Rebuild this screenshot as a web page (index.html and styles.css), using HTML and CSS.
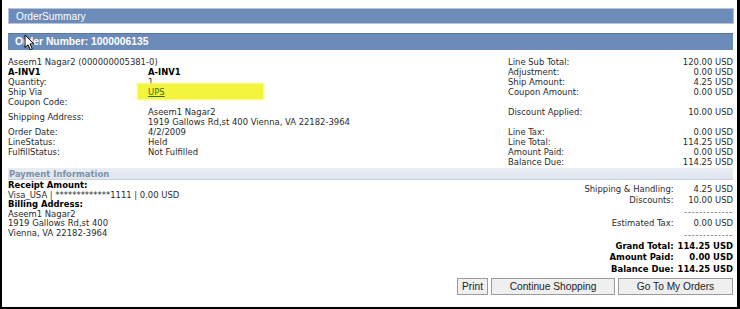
FILE: index.html
```html
<!DOCTYPE html>
<html lang="en">
<head>
    <meta charset="UTF-8">
    <title>Order Summary</title>
    <link rel="stylesheet" href="styles.css">
</head>
<body>
    <div class="frame">
        <div class="bar bar-title">OrderSummary</div>
        <div class="bar bar-order">
            Order Number: 1000006135
            <!-- mouse pointer caught in the screenshot -->
            <svg class="cursor" width="11" height="17" viewBox="0 0 11 17">
                <path d="M1 1 L1 13.5 L4 10.8 L6.3 15.6 L8.3 14.7 L6 9.9 L9.8 9.9 Z" fill="#fff" stroke="#000" stroke-width="1" stroke-linejoin="round"/>
            </svg>
        </div>

        <div class="details">
            <div class="span2">Aseem1 Nagar2 (000000005381-0)</div>
            <div class="r-label">Line Sub Total:</div>
            <div class="r-value">120.00 USD</div>

            <div class="bold">A-INV1</div>
            <div class="bold">A-INV1</div>
            <div class="r-label">Adjustment:</div>
            <div class="r-value">0.00 USD</div>

            <div>Quantity:</div>
            <div>1</div>
            <div class="r-label">Ship Amount:</div>
            <div class="r-value">4.25 USD</div>

            <div>Ship Via</div>
            <div><span class="marker"><a href="#" class="ship-link">UPS</a></span></div>
            <div class="r-label">Coupon Amount:</div>
            <div class="r-value">0.00 USD</div>

            <div>Coupon Code:</div>
            <div></div>
            <div class="r-label tall">Discount Applied:</div>
            <div class="r-value tall">10.00 USD</div>

            <div class="middle">Shipping Address:</div>
            <div>Aseem1 Nagar2<br>1919 Gallows Rd,st 400 Vienna, VA 22182-3964</div>

            <div>Order Date:</div>
            <div>4/2/2009</div>
            <div class="r-label">Line Tax:</div>
            <div class="r-value">0.00 USD</div>

            <div>LineStatus:</div>
            <div>Held</div>
            <div class="r-label">Line Total:</div>
            <div class="r-value">114.25 USD</div>

            <div>FulfillStatus:</div>
            <div>Not Fulfilled</div>
            <div class="r-label">Amount Paid:</div>
            <div class="r-value">0.00 USD</div>

            <div class="span2"></div>
            <div class="r-label">Balance Due:</div>
            <div class="r-value">114.25 USD</div>
        </div>

        <div class="section-bar">Payment Information</div>

        <div class="payment">
            <div class="billing">
                <div class="bold">Receipt Amount:</div>
                <div>Visa_USA | *************1111 | 0.00 USD</div>
                <div class="bold">Billing Address:</div>
                <div>Aseem1 Nagar2</div>
                <div>1919 Gallows Rd,st 400</div>
                <div>Vienna, VA 22182-3964</div>
            </div>
            <div class="totals">
                <div>Shipping &amp; Handling:</div><div>4.25 USD</div>
                <div>Discounts:</div><div>10.00 USD</div>
                <div></div><div class="dashes">-------------</div>
                <div>Estimated Tax:</div><div>0.00 USD</div>
                <div></div><div class="dashes">-------------</div>
                <div class="bold">Grand Total:</div><div class="bold">114.25 USD</div>
                <div class="bold">Amount Paid:</div><div class="bold">0.00 USD</div>
                <div class="bold">Balance Due:</div><div class="bold">114.25 USD</div>
            </div>
        </div>

        <div class="actions">
            <button class="btn btn-print">Print</button>
            <button class="btn btn-continue">Continue Shopping</button>
            <button class="btn btn-orders">Go To My Orders</button>
        </div>
    </div>
</body>
</html>
```

FILE: styles.css
```css
body {
    margin: 0;
    background-color: #fff;
}
.frame {
    width: 740px;
    height: 309px;
    box-sizing: border-box;
    border-left: 2px solid #000;
    border-right: 3px solid #000;
    border-bottom: 2px solid #000;
    padding: 8px 4px 0 6px;
    font-family: "DejaVu Sans Condensed", "DejaVu Sans", Verdana, sans-serif;
    font-size: 9.4px;
    color: #2b2b2b;
    overflow: hidden;
}
.bar {
    background-color: #6b8bb9;
    color: #fff;
    font-family: "Liberation Sans", Arial, sans-serif;
    padding-left: 7px;
    box-sizing: border-box;
}
.bar-title {
    height: 16px;
    line-height: 15px;
    font-size: 10.2px;
    border: 1px solid #b8c4d7;
    margin-right: -1px;
    margin-bottom: 9px;
}
.bar-order {
    position: relative;
    height: 17px;
    line-height: 16px;
    font-size: 10.3px;
    font-weight: bold;
    border-top: 1px solid #58779f;
}
.cursor {
    position: absolute;
    left: 16px;
    top: 0;
}
.details {
    display: grid;
    grid-template-columns: 140px 360px 1fr auto;
    line-height: 10px;
    margin-top: 7px;
}
.span2 {
    grid-column: span 2;
}
.bold {
    font-weight: bold;
    color: #000;
}
.middle {
    align-self: center;
}
.r-value {
    text-align: right;
}
.tall {
    grid-row: span 2;
    align-self: center;
}
.marker {
    display: inline-block;
    width: 115px;
    margin: -3px 0 -2px -10px;
    padding: 3px 0 2px 10px;
    background-color: #f3f43c;
    box-shadow: 0 0 2px 1px #f6f66a;
}
.ship-link {
    color: #3d6a1e;
    text-decoration: underline;
}
.section-bar {
    margin-top: 1px;
    height: 11px;
    line-height: 11px;
    padding-left: 1px;
    background: linear-gradient(#e9eef4, #dfe6ee);
    border-bottom: 1px solid #c9d3df;
    color: #7f91a8;
    font-weight: bold;
}
.payment {
    display: flex;
    justify-content: space-between;
}
.billing {
    line-height: 9.6px;
}
.totals {
    display: grid;
    grid-template-columns: auto auto;
    column-gap: 4px;
    line-height: 11.4px;
    padding-top: 3px;
    text-align: right;
}
.dashes {
    color: #666;
    letter-spacing: 0.7px;
}
.actions {
    display: flex;
    justify-content: flex-end;
    gap: 3px;
    margin-top: 4px;
}
.btn {
    height: 17px;
    padding: 0;
    background-color: #efefef;
    border: 1px solid #9c9c9c;
    border-radius: 0;
    font-family: "Liberation Sans", Arial, sans-serif;
    font-size: 10.2px;
    color: #222;
    cursor: pointer;
}
.btn-print {
    width: 31px;
}
.btn-continue {
    width: 124px;
}
.btn-orders {
    width: 115px;
}
```
